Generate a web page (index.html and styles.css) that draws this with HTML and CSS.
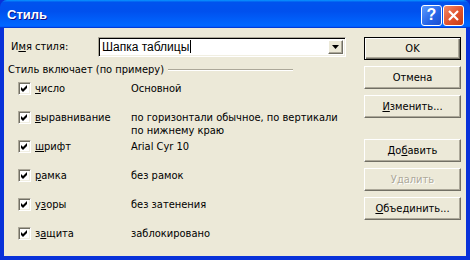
FILE: index.html
```html
<!DOCTYPE html>
<html>
  <head>
    <title>Стиль</title>
    <meta charset="UTF-8" />
    <link rel="stylesheet" href="styles.css">
  </head>
  <body>
    <div class="window">
      <div class="titlebar">
        <span class="title">Стиль</span>
        <div class="title-buttons">
          <span class="tbtn help">?</span>
          <span class="tbtn close">
            <svg width="11" height="11" viewBox="0 0 11 11">
              <path d="M1 1 L10 10 M10 1 L1 10" stroke="#fff" stroke-width="2.2" fill="none" />
            </svg>
          </span>
        </div>
      </div>

      <div class="client">
        <div class="main">
          <div class="name-row">
            <span class="name-label">И<u>м</u>я стиля:</span>
            <div class="combo">
              <span class="combo-text">Шапка таблицы</span><span class="caret"></span>
              <span class="drop">
                <svg width="7" height="4" viewBox="0 0 7 4"><path d="M0 0 H7 L3.5 4 Z" fill="#000" /></svg>
              </span>
            </div>
          </div>

          <div class="group-head">
            <span>Стиль включает (по примеру)</span>
            <span class="etch"></span>
          </div>

          <div class="items">
            <span class="check"></span><span><u>ч</u>исло</span><span>Основной</span>
            <span class="check"></span><span><u>в</u>ыравнивание</span><span>по горизонтали обычное, по вертикали<br>по нижнему краю</span>
            <span class="check"></span><span><u>ш</u>рифт</span><span>Arial Cyr 10</span>
            <span class="check"></span><span><u>р</u>амка</span><span>без рамок</span>
            <span class="check"></span><span>у<u>з</u>оры</span><span>без затенения</span>
            <span class="check"></span><span>з<u>а</u>щита</span><span>заблокировано</span>
          </div>
        </div>

        <div class="buttons">
          <button class="btn default">OK</button>
          <button class="btn">Отмена</button>
          <button class="btn"><u>И</u>зменить...</button>
          <button class="btn spaced">До<u>б</u>авить</button>
          <button class="btn disabled">Удалить</button>
          <button class="btn"><u>О</u>бъединить...</button>
        </div>
      </div>
    </div>
  </body>
</html>
```

FILE: styles.css
```css
body {
  margin: 0;
  background: #ece9d8;
}

.window {
  width: 470px;
  height: 260px;
  box-sizing: border-box;
  background: #0831d9;
  padding: 0 4px 4px 4px;
  display: flex;
  flex-direction: column;
  font-family: "DejaVu Sans", "Liberation Sans", sans-serif;
  font-stretch: condensed;
  font-size: 11px;
  color: #000;
}

.titlebar {
  height: 29px;
  margin: 0 -4px;
  padding: 0 6px 0 7px;
  display: flex;
  align-items: center;
  justify-content: space-between;
  border-radius: 7px 7px 0 0;
  background: linear-gradient(180deg, #0997ff, #0053ee 8%, #0050ee 40%, #06f 88%, #06f 93%, #005bff 95%, #003dd7 96%, #003dd7);
}

.title {
  font-family: "Liberation Sans", sans-serif;
  font-stretch: normal;
  font-weight: bold;
  font-size: 13px;
  color: #fff;
  text-shadow: 1px 1px #0f1089;
  padding-top: 1px;
}

.title-buttons {
  display: flex;
  gap: 1px;
  padding-top: 2px;
}

.tbtn {
  width: 19px;
  height: 19px;
  border: 1px solid #fff;
  border-radius: 3px;
  display: flex;
  align-items: center;
  justify-content: center;
}

.help {
  background: linear-gradient(135deg, #5c9cff, #2463e6 60%, #1c4fd0);
  color: #fff;
  font-family: "Liberation Sans", sans-serif;
  font-stretch: normal;
  font-weight: bold;
  font-size: 16px;
}

.close {
  background: linear-gradient(135deg, #f08a68, #e0522c 55%, #c73c14);
}

.client {
  flex: 1;
  background: #ece9d8;
  display: flex;
  padding-top: 8px;
}

.main {
  width: 356px;
  padding-left: 4px;
}

.name-row {
  display: flex;
  align-items: center;
  height: 21px;
}

.name-label {
  width: 87px;
  padding-left: 3px;
}

.combo {
  width: 241px;
  height: 16px;
  background: #fff;
  border: 1px solid;
  border-color: #aca899 #fff #fff #aca899;
  box-shadow: inset 1px 1px #000, inset -1px -1px #f1efe2;
  padding: 1px 2px 1px 3px;
  display: flex;
  align-items: center;
}

.combo-text {
  font-family: "Liberation Sans", sans-serif;
  font-stretch: normal;
  font-size: 12px;
}

.caret {
  width: 1px;
  height: 13px;
  background: #000;
  margin-left: 1px;
}

.drop {
  margin-left: auto;
  width: 13px;
  height: 12px;
  border: 1px solid;
  border-color: #fff #716f64 #716f64 #fff;
  box-shadow: inset -1px -1px #aca899;
  background: #ece9d8;
  display: flex;
  align-items: center;
  justify-content: center;
}

.group-head {
  width: 285px;
  display: flex;
  align-items: center;
  margin-top: 6px;
  line-height: 13px;
}

.etch {
  flex: 1;
  margin-left: 4px;
  border-top: 1px solid #aca899;
  border-bottom: 1px solid #fff;
}

.items {
  display: grid;
  grid-template-columns: 13px 92px auto;
  grid-auto-rows: 29px;
  column-gap: 4px;
  padding-left: 10px;
  margin-top: 6px;
  line-height: 13px;
}

.check {
  width: 11px;
  height: 11px;
  background: #fff;
  border: 1px solid;
  border-color: #aca899 #fff #fff #aca899;
  box-shadow: inset 1px 1px #716f64, inset -1px -1px #f1efe2;
  background-image: url("data:image/svg+xml,%3Csvg xmlns='http://www.w3.org/2000/svg' width='11' height='11'%3E%3Cpath d='M2 4 L4 6 L8 2 L8 5 L4 9 L2 7 Z' fill='%23000'/%3E%3C/svg%3E");
}

.buttons {
  width: 97px;
  display: flex;
  flex-direction: column;
  gap: 6px;
  padding-top: 1px;
}

.btn {
  height: 23px;
  width: 97px;
  font: inherit;
  color: #000;
  background: #ece9d8;
  border: 1px solid;
  border-color: #fff #716f64 #716f64 #fff;
  box-shadow: inset -1px -1px #aca899;
  padding: 0;
}

.default {
  border: 1px solid #000;
  box-shadow: inset 1px 1px #fff, inset -1px -1px #716f64, inset -2px -2px #aca899;
}

.spaced {
  margin-top: 15px;
}

.disabled {
  color: #aca899;
  text-shadow: 1px 1px #fff;
}
```
